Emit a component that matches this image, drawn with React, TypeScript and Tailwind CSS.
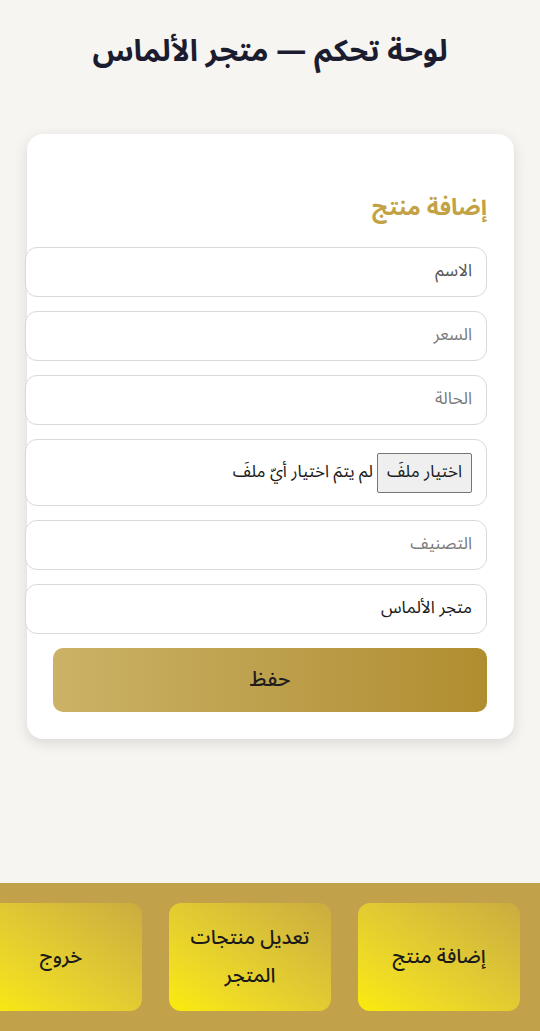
import React from "react";

const font = { fontFamily: '"Noto Sans Arabic", "Noto Sans", "DejaVu Sans", sans-serif' };

function Field({ placeholder, value, dark }: { placeholder?: string; value?: string; dark?: boolean }) {
  return (
    <div className="flex h-[50px] w-[462px] items-center rounded-[12px] border border-[#d9d9d9] bg-white px-[14px] text-[17px]">
      {value ? (
        <span className="text-[#1a1a1a]">{value}</span>
      ) : (
        <span className={dark ? "text-[#555555]" : "text-[#7c7c7c]"}>{placeholder}</span>
      )}
    </div>
  );
}

export default function App() {
  return (
    <div dir="rtl" style={font} className="flex min-h-[1031px] flex-col bg-[#f6f5f1]">
      <h1 className="pt-[28px] text-center text-[30px] font-bold leading-[48px] text-[#1c1c30]">
        لوحة تحكم — متجر الألماس
      </h1>
      <div className="mx-[26px] mt-[58px] flex h-[605px] w-[487px] flex-col items-start rounded-[16px] bg-white pr-[27px] pb-[27px] pt-[50px] shadow-[0_4px_14px_rgba(0,0,0,0.12)]">
        <h2 className="text-[23px] font-bold leading-[48px] text-[#c2a245]">إضافة منتج</h2>
        <div className="mt-[15px] flex flex-col gap-[14px]">
          <Field placeholder="الاسم" dark />
          <Field placeholder="السعر" />
          <Field placeholder="الحالة" />
          <div className="flex h-[67px] w-[462px] items-center gap-[4px] rounded-[12px] border border-[#d9d9d9] bg-white px-[14px] text-[17px] text-[#1a1a1a]">
            <span className="flex h-[40px] items-center rounded-[2px] border border-[#767676] bg-[#efefef] px-[9px]">
              اختيار ملفَ
            </span>
            <span>لم يتمَ اختيار أيّ ملفَ</span>
          </div>
          <Field placeholder="التصنيف" />
          <Field value="متجر الألماس" />
        </div>
        <button className="mt-[14px] flex h-[65px] w-[434px] items-center justify-center rounded-[10px] bg-gradient-to-l from-[#b08e2f] to-[#cbb266] text-[21px] font-medium text-[#1d1d1d]">
          حفظ
        </button>
      </div>
      <div className="mt-auto h-[148px] overflow-hidden bg-[#c2a14b]">
        <div className="flex gap-[27px] pr-[20px] pt-[20px]">
          {["إضافة منتج", "تعديل منتجات المتجر", "خروج"].map((t) => (
            <div
              key={t}
              className="flex h-[108px] w-[162px] shrink-0 items-center justify-center rounded-[12px] bg-gradient-to-tr from-[#fbeb06] to-[#c9ac3f] px-[14px] text-center text-[20px] font-medium leading-[38px] text-[#1a1a1a]"
            >
              {t}
            </div>
          ))}
        </div>
      </div>
    </div>
  );
}
